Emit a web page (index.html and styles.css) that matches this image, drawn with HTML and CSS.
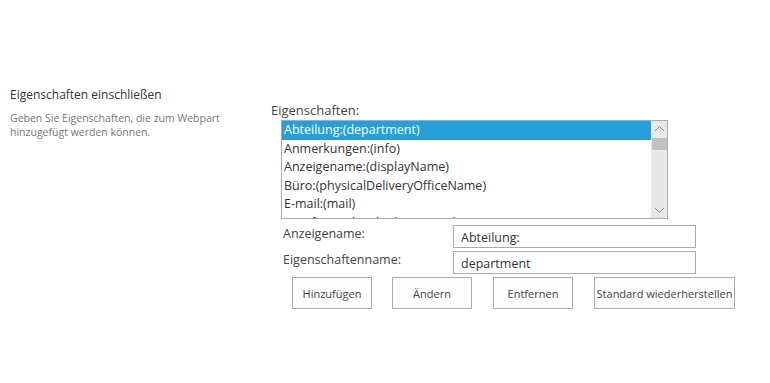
FILE: index.html
```html
<!DOCTYPE html>
<html lang="de">
<head>
    <meta charset="UTF-8">
    <title>Eigenschaften einschließen</title>
    <link rel="stylesheet" href="styles.css">
</head>
<body>

<div class="section">
    <div class="section-info">
        <h3 class="section-title">Eigenschaften einschließen</h3>
        <p class="section-desc">Geben Sie Eigenschaften, die zum Webpart hinzugefügt werden können.</p>
    </div>

    <div class="section-body">
        <div class="field-label">Eigenschaften:</div>

        <!-- Liste der Eigenschaften -->
        <div class="listbox">
            <div class="list-items">
                <div class="list-item selected">Abteilung:(department)</div>
                <div class="list-item">Anmerkungen:(info)</div>
                <div class="list-item">Anzeigename:(displayName)</div>
                <div class="list-item">Büro:(physicalDeliveryOfficeName)</div>
                <div class="list-item">E-mail:(mail)</div>
                <div class="list-item">Fax:(facsimileTelephoneNumber)</div>
            </div>
            <div class="scrollbar">
                <svg class="arrow" width="11" height="7" viewBox="0 0 11 7"><path d="M1 6 L5.5 1.5 L10 6" fill="none" stroke="#8a8a8a" stroke-width="1"/></svg>
                <div class="thumb"></div>
                <div class="track"></div>
                <svg class="arrow" width="11" height="7" viewBox="0 0 11 7"><path d="M1 1 L5.5 5.5 L10 1" fill="none" stroke="#8a8a8a" stroke-width="1"/></svg>
            </div>
        </div>

        <div class="form-row first-row">
            <label class="row-label">Anzeigename:</label>
            <input class="text-input" type="text" value="Abteilung:">
        </div>
        <div class="form-row">
            <label class="row-label">Eigenschaftenname:</label>
            <input class="text-input" type="text" value="department">
        </div>

        <div class="buttons">
            <button class="btn">Hinzufügen</button>
            <button class="btn btn-next">Ändern</button>
            <button class="btn">Entfernen</button>
            <button class="btn btn-wide">Standard wiederherstellen</button>
        </div>
    </div>
</div>

</body>
</html>
```

FILE: styles.css
```css
body {
    font-family: "Open Sans", "Noto Sans", sans-serif;
    margin: 0;
    background-color: #ffffff;
    color: #333;
}
.section {
    display: flex;
    padding-top: 87px;
}
/* linke Spalte */
.section-info {
    width: 271px;
    flex-shrink: 0;
    padding-left: 10px;
    box-sizing: border-box;
}
.section-title {
    margin: 0;
    font-size: 12px;
    font-weight: normal;
    color: #333;
    line-height: 16px;
}
.section-desc {
    margin: 8px 0 0 0;
    font-size: 10.5px;
    line-height: 14px;
    color: #777;
    width: 220px;
}
/* rechte Spalte */
.section-body {
    padding-top: 14px;
}
.field-label {
    font-size: 13px;
    line-height: 18px;
    color: #444;
}
.listbox {
    display: flex;
    margin: 1px 0 0 10px;
    width: 387px;
    height: 99px;
    border: 1px solid #ababab;
    box-sizing: border-box;
    overflow: hidden;
}
.list-items {
    flex: 1;
    overflow: hidden;
}
.list-item {
    font-size: 12.5px;
    height: 18.6px;
    line-height: 18.6px;
    padding-left: 2px;
    color: #333;
    white-space: nowrap;
}
.list-item.selected {
    background-color: #26a0da;
    color: #fff;
}
.scrollbar {
    width: 16px;
    background-color: #e8e8e8;
    display: flex;
    flex-direction: column;
    align-items: center;
}
.arrow {
    margin: 4px 0;
}
.thumb {
    width: 15px;
    height: 12px;
    background-color: #c1c1c1;
    margin-top: 2px;
}
.track {
    flex: 1;
}
/* Eingabezeilen */
.form-row {
    display: flex;
    align-items: flex-start;
    margin-left: 12px;
    margin-top: 3px;
}
.form-row.first-row {
    margin-top: 6px;
}
.row-label {
    width: 170px;
    font-size: 12.5px;
    line-height: 18px;
    color: #444;
}
.text-input {
    width: 243px;
    height: 23px;
    box-sizing: border-box;
    border: 1px solid #ababab;
    font-family: "Open Sans", "Noto Sans", sans-serif;
    font-size: 12.5px;
    color: #333;
    padding: 2px 7px 0 7px;
    margin: 0;
}
/* Schaltflächen */
.buttons {
    display: flex;
    gap: 21px;
    margin: 3px 0 0 21px;
}
.btn {
    width: 80px;
    height: 32px;
    background-color: #fdfdfd;
    border: 1px solid #ababab;
    font-family: "Open Sans", "Noto Sans", sans-serif;
    font-size: 11px;
    color: #444;
    padding: 0;
}
.btn-next {
    margin-left: -1px;
}
.btn-wide {
    width: 141px;
}
```
